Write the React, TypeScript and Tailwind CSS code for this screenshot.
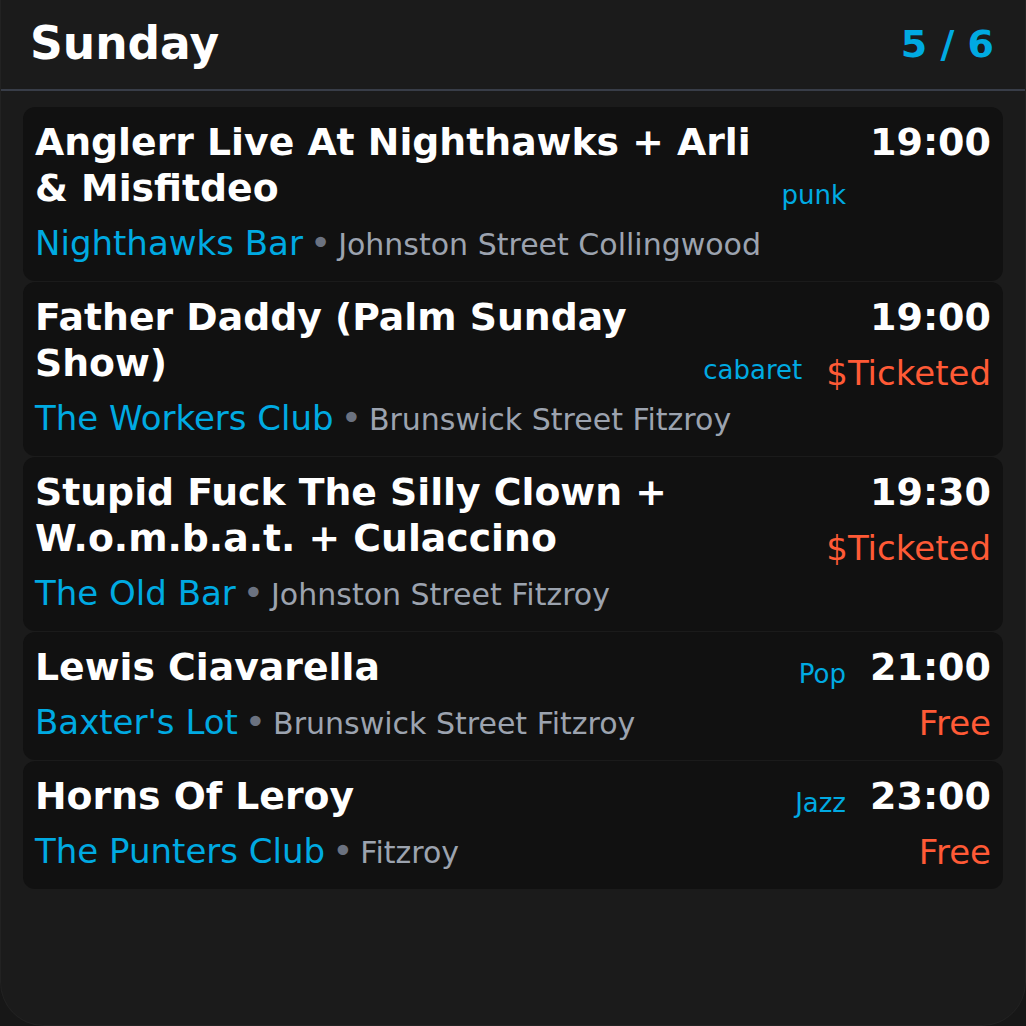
import React from 'react';

type Gig = {
    title: string
    time: string
    venue: string
    area: string
    genre?: string
    price?: string
}

const gigs: Gig[] = [
    {title: 'Anglerr Live At Nighthawks + Arli & Misfitdeo', time: '19:00', venue: 'Nighthawks Bar', area: 'Johnston Street Collingwood', genre: 'punk'},
    {title: 'Father Daddy (Palm Sunday Show)', time: '19:00', venue: 'The Workers Club', area: 'Brunswick Street Fitzroy', genre: 'cabaret', price: '$Ticketed'},
    {title: 'Stupid Fuck The Silly Clown + W.o.m.b.a.t. + Culaccino', time: '19:30', venue: 'The Old Bar', area: 'Johnston Street Fitzroy', price: '$Ticketed'},
    {title: 'Lewis Ciavarella', time: '21:00', venue: "Baxter's Lot", area: 'Brunswick Street Fitzroy', genre: 'Pop', price: 'Free'},
    {title: 'Horns Of Leroy', time: '23:00', venue: 'The Punters Club', area: 'Fitzroy', genre: 'Jazz', price: 'Free'},
]

const GigCard = ({gig}: {gig: Gig}) => {
    return (
        <div className="flex gap-6 rounded-xl bg-[#111111] px-3 py-3">
            <div className="flex-1 min-w-0">
                <div className="flex items-end gap-4">
                    <h3 className="flex-1 text-[37.75px] font-bold leading-[46px] text-white">{gig.title}</h3>
                    {gig.genre && (
                        <span className="mb-[-4px] text-[26px] leading-[40px] text-[#00aae2]">{gig.genre}</span>
                    )}
                </div>
                <div className="mt-[7px] flex h-[51px] items-baseline">
                    <span className="text-[34px] leading-[50px] text-[#00aae2]">{gig.venue}</span>
                    <span className="mx-[7px] text-[36px] leading-none text-[#6b7280]">•</span>
                    <span className="text-[30px] leading-none text-[#9ca3af]">{gig.area}</span>
                </div>
            </div>
            <div className="flex flex-col items-end">
                <span className="text-[38px] font-bold leading-[46px] text-white">{gig.time}</span>
                {gig.price && (
                    <span className="mt-[8px] text-[34px] leading-[50px] text-[#ff5a36]">{gig.price}</span>
                )}
            </div>
        </div>
    )
}

export default function App() {
    return (
        <div className="h-[1026px] w-[1026px] overflow-hidden bg-[#171717]" style={{fontFamily: '"DejaVu Sans", Verdana, sans-serif'}}>
            <div className="flex h-full flex-col rounded-b-[44px] border border-t-0 border-[#222222] bg-[#1b1b1b]">
                <div className="flex h-[91px] shrink-0 items-center justify-between border-b-2 border-[#383d48] pl-[29px] pr-[31px]">
                    <h1 className="text-[45.5px] font-bold text-white">Sunday</h1>
                    <span className="text-[38px] font-bold text-[#00aae2]">5 / 6</span>
                </div>
                <div className="flex flex-col gap-px px-[22px] pt-4">
                    {gigs.map((gig, i) => <GigCard key={i} gig={gig}/>)}
                </div>
            </div>
        </div>
    )
}
